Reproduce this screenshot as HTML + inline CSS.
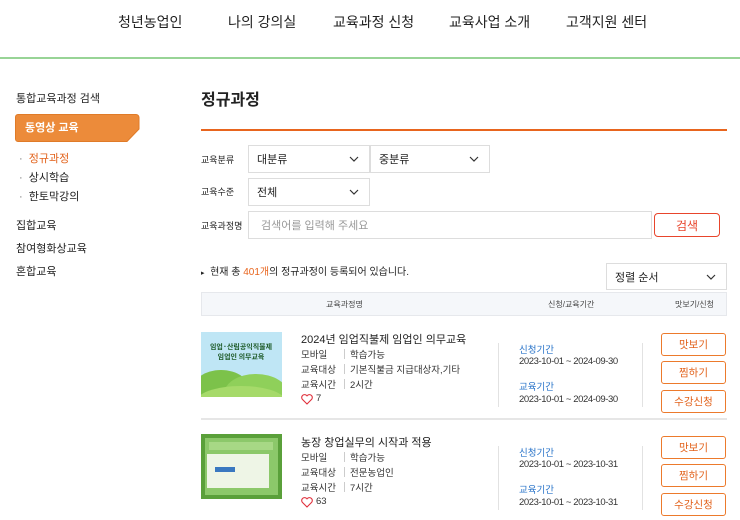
<!DOCTYPE html>
<html><head><meta charset="utf-8"><style>
*{margin:0;padding:0;box-sizing:border-box}
body{width:740px;height:520px;overflow:hidden;background:#fff;font-family:"Liberation Sans","Noto Sans CJK KR",sans-serif;color:#222;position:relative}
.a{position:absolute;white-space:nowrap}
.nav{font-size:14px;top:12px;color:#222}
.sel{position:absolute;border:1px solid #ddd;background:#fff;font-size:11px;padding-left:8px;display:flex;align-items:center}
.sel svg{position:absolute;right:10px;top:50%;margin-top:-3px}
.lbl{font-size:9px;left:201px;color:#222}
.btn{position:absolute;left:661px;width:65px;height:23px;border:1.5px solid #ec7a2c;border-radius:3px;color:#e2621b;font-size:10.5px;display:flex;align-items:center;justify-content:center;background:#fff}
.r{font-size:9.5px;color:#333}
.blue{color:#2a74c9;font-size:9.5px}
.d{font-size:9.5px;color:#333;letter-spacing:-0.4px}
.vb{position:absolute;width:1px;background:#ccc}
</style></head><body>
<div class="a nav" style="left:118px">청년농업인</div>
<div class="a nav" style="left:228px">나의 강의실</div>
<div class="a nav" style="left:333px">교육과정 신청</div>
<div class="a nav" style="left:449px">교육사업 소개</div>
<div class="a nav" style="left:566px">고객지원 센터</div>
<div class="a" style="left:0;top:57px;width:740px;height:2px;background:#98d496"></div>

<div class="a" style="left:16px;top:90px;font-size:11px">통합교육과정 검색</div>
<svg class="a" style="left:15px;top:114px" width="125" height="28"><path d="M3 .5H121a3 3 0 0 1 3 3V15L112 27.5H3a2.5 2.5 0 0 1-2.5-2.5V3A2.5 2.5 0 0 1 3 .5z" fill="#ec8b3a" stroke="#e07b28"/></svg>
<div class="a" style="left:25px;top:119px;font-size:11px;color:#fff;font-weight:bold">동영상 교육</div>
<div class="a" style="left:19px;top:150px;font-size:11px;color:#e2621b"><span style="color:#777">·</span>&nbsp; 정규과정</div>
<div class="a" style="left:19px;top:169px;font-size:11px"><span style="color:#777">·</span>&nbsp; 상시학습</div>
<div class="a" style="left:19px;top:188px;font-size:11px"><span style="color:#777">·</span>&nbsp; 한토막강의</div>
<div class="a" style="left:16px;top:217px;font-size:11px">집합교육</div>
<div class="a" style="left:16px;top:240px;font-size:11px">참여형화상교육</div>
<div class="a" style="left:16px;top:263px;font-size:11px">혼합교육</div>

<div class="a" style="left:201px;top:86px;font-size:16px;font-weight:bold">정규과정</div>
<div class="a" style="left:201px;top:129px;width:526px;height:1.5px;background:#e8651e"></div>

<div class="a lbl" style="top:153px">교육분류</div>
<div class="sel" style="left:248px;top:145px;width:122px;height:28px">대분류<svg width="10" height="6"><path d="M1 1l4 4 4-4" fill="none" stroke="#333" stroke-width="1.2"/></svg></div>
<div class="sel" style="left:370px;top:145px;width:120px;height:28px">중분류<svg width="10" height="6"><path d="M1 1l4 4 4-4" fill="none" stroke="#333" stroke-width="1.2"/></svg></div>
<div class="a lbl" style="top:185px">교육수준</div>
<div class="sel" style="left:248px;top:178px;width:122px;height:28px">전체<svg width="10" height="6"><path d="M1 1l4 4 4-4" fill="none" stroke="#333" stroke-width="1.2"/></svg></div>
<div class="a lbl" style="top:219px">교육과정명</div>
<div class="sel" style="left:248px;top:211px;width:404px;height:28px;color:#999;padding-left:12px">검색어를 입력해 주세요</div>
<div class="a" style="left:654px;top:213px;width:66px;height:24px;border:1.5px solid #e8452c;border-radius:4px;color:#e8452c;font-size:12px;display:flex;align-items:center;justify-content:center">검색</div>

<div class="a" style="left:201px;top:263px;font-size:10px"><span style="font-size:7px">▸</span>&nbsp; 현재 총 <span style="color:#e8651e">401개</span>의 정규과정이 등록되어 있습니다.</div>
<div class="sel" style="left:606px;top:263px;width:121px;height:27px">정렬 순서<svg width="10" height="6"><path d="M1 1l4 4 4-4" fill="none" stroke="#333" stroke-width="1.2"/></svg></div>
<div class="a" style="left:201px;top:292px;width:526px;height:24px;background:#f5f7fa;border:1px solid #e6e8ec"></div>
<div class="a" style="left:326px;top:299px;font-size:8px;color:#444">교육과정명</div>
<div class="a" style="left:548px;top:299px;font-size:8px;color:#444">신청/교육기간</div>
<div class="a" style="left:675px;top:299px;font-size:8px;color:#444">맛보기/신청</div>

<!-- row1 -->
<svg class="a" style="left:201px;top:332px" width="81" height="65"><rect width="81" height="65" fill="#bfe6f5"/><ellipse cx="20" cy="60" rx="30" ry="22" fill="#7cc24a"/><ellipse cx="55" cy="62" rx="32" ry="20" fill="#8fd05a"/><ellipse cx="40" cy="70" rx="45" ry="16" fill="#a6da6a"/><text x="40" y="17" font-size="7" text-anchor="middle" fill="#1f5c2a" font-weight="bold" font-family="Noto Sans CJK KR">임업·산림공익직불제</text><text x="40" y="27" font-size="7" text-anchor="middle" fill="#1f5c2a" font-weight="bold" font-family="Noto Sans CJK KR">임업인 의무교육</text></svg>
<div class="a" style="left:301px;top:331px;font-size:11px">2024년 임업직불제 임업인 의무교육</div>
<div class="a r" style="left:301px;top:347px">모바일</div><div class="vb" style="left:344px;top:349px;height:10px"></div><div class="a r" style="left:350px;top:347px">학습가능</div>
<div class="a r" style="left:301px;top:362px">교육대상</div><div class="vb" style="left:344px;top:364px;height:10px"></div><div class="a r" style="left:350px;top:362px">기본직불금 지급대상자,기타</div>
<div class="a r" style="left:301px;top:377px">교육시간</div><div class="vb" style="left:344px;top:379px;height:10px"></div><div class="a r" style="left:350px;top:377px">2시간</div>
<svg class="a" style="left:301px;top:394px" width="12" height="11"><path d="M6 10L1.3 5.3A2.8 2.8 0 0 1 6 1.8a2.8 2.8 0 0 1 4.7 3.5z" fill="none" stroke="#e0303c" stroke-width="1.1"/></svg>
<div class="a r" style="left:316px;top:393px">7</div>
<div class="vb" style="left:498px;top:343px;height:64px;background:#e2e2e2"></div>
<div class="a blue" style="left:519px;top:342px">신청기간</div>
<div class="a d" style="left:519px;top:356px">2023-10-01 ~ 2024-09-30</div>
<div class="a blue" style="left:519px;top:379px">교육기간</div>
<div class="a d" style="left:519px;top:394px">2023-10-01 ~ 2024-09-30</div>
<div class="vb" style="left:642px;top:343px;height:64px;background:#e2e2e2"></div>
<div class="btn" style="top:333px">맛보기</div>
<div class="btn" style="top:361px">찜하기</div>
<div class="btn" style="top:390px">수강신청</div>
<div class="a" style="left:201px;top:418px;width:526px;height:1.5px;background:#e6e6e6"></div>

<!-- row2 -->
<svg class="a" style="left:201px;top:434px" width="81" height="65"><rect width="81" height="65" fill="#5aa03a"/><rect x="4" y="4" width="73" height="57" fill="#8cc86a"/><rect x="6" y="20" width="62" height="34" fill="#eef5e6"/><rect x="14" y="33" width="20" height="5" fill="#3a78c0"/><rect x="8" y="8" width="64" height="8" fill="#a7d885"/></svg>
<div class="a" style="left:301px;top:434px;font-size:11px">농장 창업실무의 시작과 적용</div>
<div class="a r" style="left:301px;top:450px">모바일</div><div class="vb" style="left:344px;top:452px;height:10px"></div><div class="a r" style="left:350px;top:450px">학습가능</div>
<div class="a r" style="left:301px;top:465px">교육대상</div><div class="vb" style="left:344px;top:467px;height:10px"></div><div class="a r" style="left:350px;top:465px">전문농업인</div>
<div class="a r" style="left:301px;top:480px">교육시간</div><div class="vb" style="left:344px;top:482px;height:10px"></div><div class="a r" style="left:350px;top:480px">7시간</div>
<svg class="a" style="left:301px;top:497px" width="12" height="11"><path d="M6 10L1.3 5.3A2.8 2.8 0 0 1 6 1.8a2.8 2.8 0 0 1 4.7 3.5z" fill="none" stroke="#e0303c" stroke-width="1.1"/></svg>
<div class="a r" style="left:316px;top:496px">63</div>
<div class="vb" style="left:498px;top:446px;height:64px;background:#e2e2e2"></div>
<div class="a blue" style="left:519px;top:445px">신청기간</div>
<div class="a d" style="left:519px;top:459px">2023-10-01 ~ 2023-10-31</div>
<div class="a blue" style="left:519px;top:482px">교육기간</div>
<div class="a d" style="left:519px;top:497px">2023-10-01 ~ 2023-10-31</div>
<div class="vb" style="left:642px;top:446px;height:64px;background:#e2e2e2"></div>
<div class="btn" style="top:436px">맛보기</div>
<div class="btn" style="top:464px">찜하기</div>
<div class="btn" style="top:493px">수강신청</div>
</body></html>
